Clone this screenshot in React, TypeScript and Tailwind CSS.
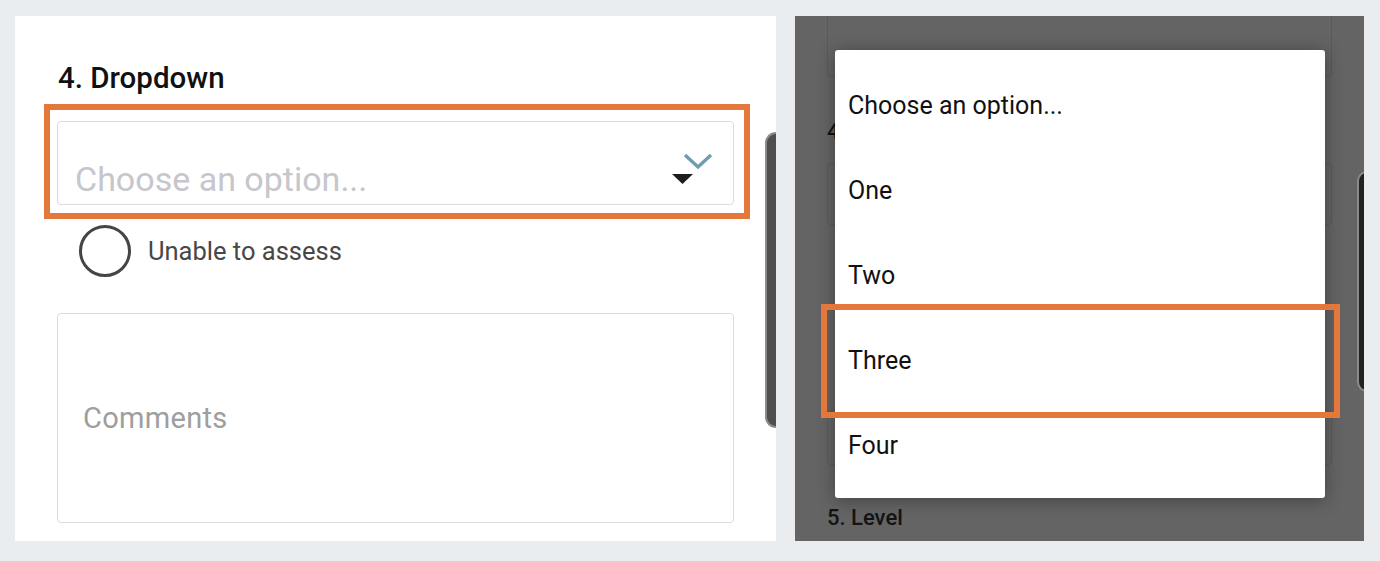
import React from "react";

const options = ["Choose an option...", "One", "Two", "Three", "Four"];

const SelectIcon = () => (
  <svg
    className="absolute left-[613px] top-[30px] w-[42px] h-[34px]"
    viewBox="0 0 42 34"
    fill="none"
  >
    <polyline
      points="14,3 27,15 40,3"
      stroke="#6e9dad"
      strokeWidth="3.4"
      strokeLinecap="butt"
      strokeLinejoin="miter"
    />
    <polygon points="1,22 22,22 11.5,32" fill="#1e1e1e" />
  </svg>
);

const FormPanel = () => {
  return (
    <div className="relative w-[761px] h-[525px] bg-white overflow-hidden px-[42px] pt-[45px]">
      {/* edge of the device behind */}
      <div className="absolute right-0 top-[116px] w-[11px] h-[296px] bg-[#4e4e4e] rounded-l-[12px] border-l-2 border-t-2 border-b-2 border-[#8a8a8a]" />

      <h2 className="text-[29.5px] leading-[34px] font-medium text-[#111] ml-[1px]">4. Dropdown</h2>

      <div className="relative mt-[26px]">
        <div className="relative h-[84px] border border-[#dcdcdc] rounded-[4px] flex items-end pl-[17px] pb-[5px]">
          <span className="text-[34px] leading-[40px] text-[#c6c6cc]">Choose an option...</span>
          <SelectIcon />
        </div>
        {/* highlight */}
        <div className="absolute -left-[13px] -top-[17px] -right-[16px] -bottom-[14px] border-[6px] border-[#e4783a] pointer-events-none" />
      </div>

      <div className="flex items-center mt-[20px] ml-[22px] gap-[17px]">
        <div className="w-[52px] h-[52px] rounded-full border-[3px] border-[#454545]" />
        <span className="text-[25.5px] leading-[30px] text-[#474747]">Unable to assess</span>
      </div>

      <div className="mt-[36px] h-[210px] border border-[#dcdcdc] rounded-[4px] flex items-center pl-[25px]">
        <span className="text-[29px] leading-[34px] text-[#9e9e9e] tracking-[0.3px]">Comments</span>
      </div>
    </div>
  );
};

const MenuPanel = () => {
  return (
    <div className="relative w-[569px] h-[525px] bg-[#646464] overflow-hidden pl-[32px] pr-[32px]">
      {/* dimmed form behind the menu */}
      <div className="flex flex-col">
        <div className="-mt-[10px] h-[71px] border border-[#5a5a5a] rounded-[4px]" />
        <div className="mt-[43px] text-[22px] leading-[24px] font-medium text-[#111]">4. Dropdown</div>
        <div className="mt-[19px] h-[62px] border border-[#5a5a5a] rounded-[4px]" />
        <div className="mt-[185px] h-[55px] border border-[#5a5a5a] rounded-[4px]" />
        <div className="mt-[40px] text-[22px] leading-[26px] font-medium text-[#141414]">5. Level</div>
      </div>
      <div className="absolute left-[562px] top-[155px] w-[12px] h-[221px] bg-[#222] rounded-l-[10px] border-2 border-[#8a8a8a]" />

      {/* open select menu */}
      <div className="absolute left-[40px] top-[34px] w-[490px] h-[448px] bg-white rounded-[3px] pt-[13px] pb-[10px] shadow-[0_2px_18px_rgba(0,0,0,0.35)]">
        {options.map((o) => (
          <div key={o} className="h-[85px] flex items-center px-[13px] text-[25px] text-[#111]">
            {o}
          </div>
        ))}
      </div>

      {/* highlight */}
      <div className="absolute left-[26px] top-[288px] w-[519px] h-[114px] border-[6px] border-[#e4783a]" />
    </div>
  );
};

export default function App() {
  return (
    <div
      className="w-[1380px] h-[561px] bg-[#e9edf0] flex gap-[19px] pt-[16px] pl-[15px]"
      style={{ fontFamily: "Roboto, 'Liberation Sans', sans-serif" }}
    >
      <FormPanel />
      <MenuPanel />
    </div>
  );
}
